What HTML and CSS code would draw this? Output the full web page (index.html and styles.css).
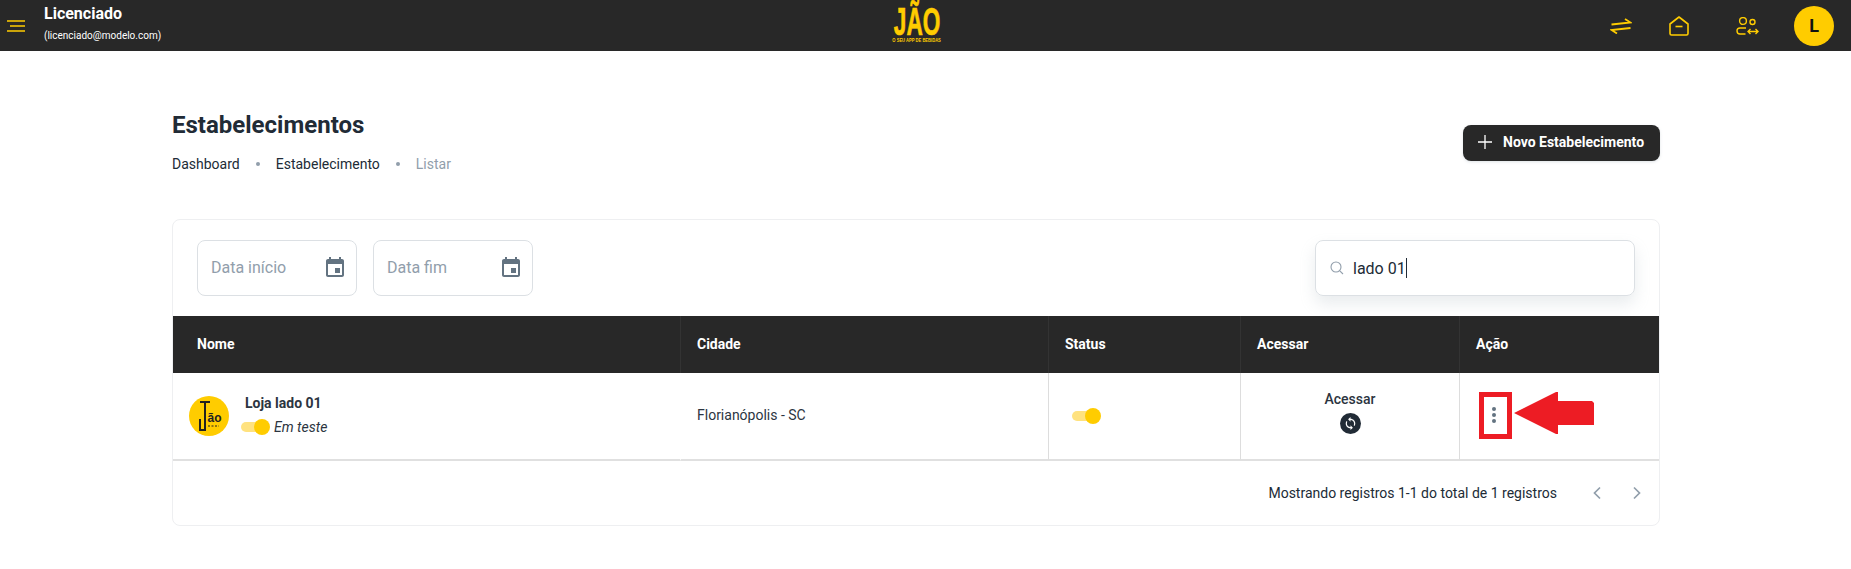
FILE: index.html
```html
<!DOCTYPE html>
<html lang="pt-BR">
<head>
    <meta charset="UTF-8">
    <meta name="viewport" content="width=device-width, initial-scale=1.0">
    <title>Estabelecimentos</title>
    <link rel="stylesheet" href="styles.css">
</head>
<body>
    <header class="topbar">
        <div class="topbar-left">
            <svg class="menu-icon" width="18" height="12" viewBox="0 0 18 12" fill="none" stroke="#FFCC00" stroke-width="1.6">
                <path d="M0 1h18M3 6h15M0 11h18"/>
            </svg>
            <div class="user-info">
                <div class="user-name">Licenciado</div>
                <div class="user-mail">(licenciado@modelo.com)</div>
            </div>
        </div>
        <div class="brand">
            <div class="brand-name">JÃO</div>
            <div class="brand-tag">O SEU APP DE BEBIDAS</div>
        </div>
        <div class="topbar-right">
            <svg class="swap-icon" width="22" height="16" viewBox="0 0 22 16" fill="none" stroke="#FFCC00" stroke-width="1.8">
                <path d="M1.5 6.5L20.5 4.5L15 1M20.5 10L1.5 12L7 15.5"/>
            </svg>
            <svg class="home-icon" width="20" height="20" viewBox="0 0 20 20" fill="none" stroke="#FFCC00" stroke-width="1.6" stroke-linejoin="round">
                <path d="M1 8L10 1L19 8V17.5Q19 19 17.5 19H2.5Q1 19 1 17.5Z"/>
                <path d="M6.5 10.5h7"/>
            </svg>
            <svg class="users-icon" width="23" height="18" viewBox="0 0 23 18" fill="none" stroke="#FFCC00" stroke-width="1.4">
                <circle cx="7" cy="4" r="3.4"/>
                <circle cx="16.5" cy="5" r="2.5"/>
                <path d="M10 11H4Q1 11 1 13.8Q1 17 4 17H9.5"/>
                <path d="M12 14.5h10M14.5 12l-2.5 2.5l2.5 2.5M19.5 12l2.5 2.5l-2.5 2.5"/>
            </svg>
            <div class="avatar">L</div>
        </div>
    </header>

    <main class="page">
        <section class="page-head">
            <div>
                <h1>Estabelecimentos</h1>
                <nav class="breadcrumb">
                    <a href="#">Dashboard</a>
                    <span class="dot"></span>
                    <a href="#">Estabelecimento</a>
                    <span class="dot"></span>
                    <span class="current">Listar</span>
                </nav>
            </div>
            <button class="btn-new" type="button">
                <svg width="14" height="14" viewBox="0 0 14 14" fill="none" stroke="#fff" stroke-width="1.3">
                    <path d="M7 0v14M0 7h14"/>
                </svg>
                Novo Estabelecimento
            </button>
        </section>

        <section class="card">
            <div class="toolbar">
                <div class="date-field">
                    <span>Data início</span>
                    <svg width="24" height="24" viewBox="0 0 24 24" fill="#637381">
                        <path d="M17 12h-5v5h5v-5zM16 1v2H8V1H6v2H5c-1.11 0-1.99.9-1.99 2L3 19c0 1.1.89 2 2 2h14c1.1 0 2-.9 2-2V5c0-1.1-.9-2-2-2h-1V1h-2zm3 18H5V8h14v11z"/>
                    </svg>
                </div>
                <div class="date-field">
                    <span>Data fim</span>
                    <svg width="24" height="24" viewBox="0 0 24 24" fill="#637381">
                        <path d="M17 12h-5v5h5v-5zM16 1v2H8V1H6v2H5c-1.11 0-1.99.9-1.99 2L3 19c0 1.1.89 2 2 2h14c1.1 0 2-.9 2-2V5c0-1.1-.9-2-2-2h-1V1h-2zm3 18H5V8h14v11z"/>
                    </svg>
                </div>
                <div class="search-field">
                    <svg width="14" height="14" viewBox="0 0 14 14" fill="none" stroke="#919EAB" stroke-width="1.1">
                        <circle cx="6" cy="6" r="5"/>
                        <path d="M9.8 9.8L13 13"/>
                    </svg>
                    <span class="search-value">lado 01</span><span class="caret"></span>
                </div>
            </div>

            <table class="list">
                <colgroup>
                    <col class="col-name">
                    <col class="col-city">
                    <col class="col-status">
                    <col class="col-access">
                    <col>
                </colgroup>
                <thead>
                    <tr>
                        <th>Nome</th>
                        <th>Cidade</th>
                        <th>Status</th>
                        <th>Acessar</th>
                        <th>Ação</th>
                    </tr>
                </thead>
                <tbody>
                    <tr>
                        <td>
                            <div class="store">
                                <svg class="store-logo" width="40" height="40" viewBox="0 0 40 40">
                                    <circle cx="20" cy="20" r="20" fill="#FFCC00"/>
                                    <path d="M11 6h10M16 6v28h-5v-11" fill="none" stroke="#212121" stroke-width="2"/>
                                    <text x="18.5" y="26" class="store-logo-text">ão</text>
                                    <path d="M19 30h11" stroke="#212121" stroke-width="1" stroke-dasharray="2 1.5"/>
                                </svg>
                                <div>
                                    <div class="store-name">Loja lado 01</div>
                                    <div class="store-state">
                                        <span class="toggle"><span class="thumb"></span></span>
                                        <em>Em teste</em>
                                    </div>
                                </div>
                            </div>
                        </td>
                        <td>Florianópolis - SC</td>
                        <td class="status-cell"><span class="toggle"><span class="thumb"></span></span></td>
                        <td>
                            <div class="access">
                                <span>Acessar</span>
                                <svg width="21" height="21" viewBox="0 0 21 21">
                                    <circle cx="10.5" cy="10.5" r="10.5" fill="#212B36"/>
                                    <g transform="translate(3.3 3.3) scale(.6)">
                                        <path fill="#fff" d="M12 4V1L8 5l4 4V6c3.31 0 6 2.69 6 6 0 1.01-.25 1.97-.7 2.8l1.46 1.46C19.54 15.03 20 13.57 20 12c0-4.42-3.58-8-8-8zm0 14c-3.31 0-6-2.69-6-6 0-1.01.25-1.97.7-2.8L5.24 7.74C4.46 8.97 4 10.43 4 12c0 4.42 3.58 8 8 8v3l4-4-4-4v3z"/>
                                    </g>
                                </svg>
                            </div>
                        </td>
                        <td class="action-cell">
                            <div class="action">
                                <div class="mark-box">
                                    <span></span><span></span><span></span>
                                </div>
                                <svg class="mark-arrow" width="80" height="43" viewBox="0 0 80 43">
                                    <path d="M0 21L42 0H44V9H78L80 11V33H44V42H42Z" fill="#ED1C24"/>
                                </svg>
                            </div>
                        </td>
                    </tr>
                </tbody>
            </table>

            <div class="pager">
                <span>Mostrando registros 1-1 do total de 1 registros</span>
                <div class="pager-arrows">
                    <svg width="10" height="14" viewBox="0 0 10 14" fill="none" stroke="#919EAB" stroke-width="1.7"><path d="M8 1.5L2.5 7L8 12.5"/></svg>
                    <svg width="10" height="14" viewBox="0 0 10 14" fill="none" stroke="#919EAB" stroke-width="1.7"><path d="M2 1.5L7.5 7L2 12.5"/></svg>
                </div>
            </div>
        </section>
    </main>
</body>
</html>
```

FILE: styles.css
```css
:root {
    --yellow: #FFCC00;
    --yellow-soft: #FFE27F;
    --dark: #282828;
    --text: #212B36;
    --text-grey: #637381;
    --text-light: #919EAB;
    --field-border: #DCE0E4;
    --line: #E0E0E0;
}

* {
    box-sizing: border-box;
}

body {
    font-family: Roboto, 'Liberation Sans', sans-serif;
    margin: 0;
    color: var(--text);
    background: #fff;
    font-size: 14px;
}

.topbar {
    background: var(--dark);
    height: 51px;
    display: grid;
    grid-template-columns: 1fr auto 1fr;
    align-items: center;
    padding-right: 17px;
    color: #fff;
}

.topbar-left {
    display: flex;
    align-items: center;
    padding-left: 7px;
}

.menu-icon {
    margin-top: 1px;
}

.user-info {
    margin-left: 19px;
    margin-top: -7px;
}

.user-name {
    font-size: 16px;
    font-weight: 700;
    line-height: 22px;
}

.user-mail {
    font-size: 10px;
    line-height: 12px;
    margin-top: 5px;
}

.brand {
    text-align: center;
    width: 48px;
    height: 51px;
    color: var(--yellow);
    font-family: 'Liberation Sans', sans-serif;
    font-weight: 700;
    display: flex;
    flex-direction: column;
    align-items: center;
}

.brand-name {
    font-size: 39px;
    line-height: 43px;
    height: 37px;
    transform: scaleX(.58);
    -webkit-text-stroke: .7px var(--yellow);
    white-space: nowrap;
}

.brand-tag {
    font-size: 5px;
    line-height: 6px;
    white-space: nowrap;
    transform: scaleX(.82);
}

.topbar-right {
    display: flex;
    align-items: center;
    justify-content: flex-end;
}

.swap-icon {
    margin-right: 37px;
}

.home-icon {
    margin-right: 47px;
}

.users-icon {
    margin-right: 35px;
}

.avatar {
    width: 40px;
    height: 40px;
    border-radius: 50%;
    background: var(--yellow);
    color: #111;
    font-weight: 700;
    font-size: 18px;
    display: flex;
    align-items: center;
    justify-content: center;
}

.page {
    width: 1488px;
    margin-left: 172px;
    padding-top: 56px;
}

.page-head {
    display: flex;
    align-items: center;
    justify-content: space-between;
    margin-bottom: 44px;
}

.page-head h1 {
    font-size: 24px;
    line-height: 36px;
    font-weight: 700;
    margin: 0;
    color: #212B36;
}

.breadcrumb {
    display: flex;
    align-items: center;
    margin-top: 10px;
    line-height: 22px;
}

.breadcrumb a {
    color: var(--text);
    text-decoration: none;
}

.breadcrumb .current {
    color: var(--text-light);
}

.dot {
    width: 4px;
    height: 4px;
    border-radius: 50%;
    background: var(--text-light);
    margin: 0 16px;
}

.btn-new {
    background: var(--dark);
    color: #fff;
    border: none;
    border-radius: 8px;
    width: 197px;
    height: 36px;
    margin-top: 4px;
    padding: 0 0 2px 15px;
    font-family: inherit;
    font-size: 14px;
    font-weight: 700;
    display: flex;
    align-items: center;
    gap: 11px;
    box-shadow: 0 1px 3px rgba(145, 158, 171, .3);
}

.card {
    border: 1px solid #EEEFF1;
    border-radius: 8px;
    height: 307px;
    overflow: hidden;
}

.toolbar {
    display: flex;
    padding: 20px 24px;
    gap: 16px;
}

.date-field {
    width: 160px;
    height: 56px;
    border: 1px solid var(--field-border);
    border-radius: 8px;
    padding: 0 9px 0 13px;
    display: flex;
    align-items: center;
    justify-content: space-between;
    font-size: 16px;
    color: var(--text-light);
}

.date-field span {
    margin-top: -2px;
}

.search-field {
    width: 320px;
    height: 56px;
    margin-left: auto;
    border: 1px solid var(--field-border);
    border-radius: 8px;
    padding-left: 14px;
    display: flex;
    align-items: center;
    font-size: 16px;
    box-shadow: 0 8px 16px rgba(145, 158, 171, .2);
}

.search-value {
    margin-left: 9px;
}

.caret {
    width: 1px;
    height: 20px;
    background: var(--text);
}

.list {
    width: 1486px;
    table-layout: fixed;
    border-collapse: separate;
    border-spacing: 0;
}

.col-name {
    width: 507px;
}

.col-city {
    width: 368px;
}

.col-status {
    width: 192px;
}

.col-access {
    width: 219px;
}

.list th {
    background: var(--dark);
    color: #fff;
    height: 57px;
    padding: 0 0 2px 16px;
    text-align: left;
    font-weight: 700;
    font-size: 14px;
    border-left: 1px solid #333;
}

.list th:first-child {
    padding-left: 24px;
    border-left: none;
}

.list td {
    height: 88px;
    padding: 0 0 2px 16px;
    border-left: 1px solid #DDD;
    border-bottom: 2px solid var(--line);
    color: #2C3541;
}

.list td:first-child {
    padding-left: 16px;
    border-left: none;
}

.list td:nth-child(2) {
    border-left-color: transparent;
}

.store {
    display: flex;
    align-items: center;
    gap: 16px;
    margin-top: 2px;
}

.store-logo-text {
    font-family: 'Liberation Sans', sans-serif;
    font-weight: 700;
    font-size: 12px;
    fill: #212121;
}

.store-name {
    font-weight: 700;
    line-height: 20px;
    margin-top: -3px;
}

.store-state {
    display: flex;
    align-items: center;
    gap: 7px;
    margin-left: -4px;
    margin-top: 4px;
}

.store-state em {
    line-height: 20px;
}

.toggle {
    display: inline-block;
    position: relative;
    width: 26px;
    height: 10px;
    border-radius: 5px;
    background: var(--yellow-soft);
}

.thumb {
    position: absolute;
    right: -3px;
    top: -3px;
    width: 16px;
    height: 16px;
    border-radius: 50%;
    background: var(--yellow);
}

.list .status-cell {
    padding: 0 0 0 23px;
}

.access {
    display: flex;
    flex-direction: column;
    align-items: center;
    gap: 6px;
    padding-right: 16px;
    font-weight: 500;
    margin-top: -5px;
}

.access svg {
    display: block;
}

.list .action-cell {
    padding-left: 19px;
}

.action {
    display: flex;
    align-items: flex-start;
    gap: 2px;
}

.mark-box {
    width: 33px;
    height: 47px;
    border: 5px solid #ED1C24;
    display: flex;
    flex-direction: column;
    align-items: center;
    justify-content: center;
    gap: 2px;
    padding-right: 3px;
}

.mark-box span {
    width: 4px;
    height: 4px;
    border-radius: 50%;
    background: var(--text-grey);
}

.pager {
    height: 64px;
    display: flex;
    align-items: center;
    justify-content: flex-end;
    padding-right: 17px;
}

.pager-arrows {
    display: flex;
    gap: 30px;
    margin-left: 35px;
}
```
